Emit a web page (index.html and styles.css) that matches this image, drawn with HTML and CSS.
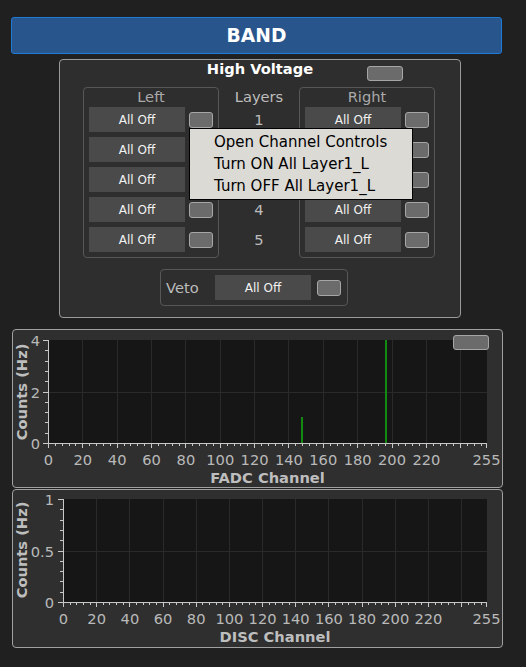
FILE: index.html
```html
<!DOCTYPE html>
<html>
<head>
<meta charset="utf-8">
<link rel="stylesheet" href="styles.css">
</head>
<body>
<div class="app">
  <header class="banner">BAND</header>

  <section class="hv">
    <div class="hv-title">
      <span></span>
      <h2>High Voltage</h2>
      <span class="toggle toggle-wide"></span>
    </div>
    <div class="hv-groups">
      <div class="side">
        <div class="side-label">Left</div>
        <div class="rows">
          <div class="row"><div class="alloff">All Off</div><span class="toggle"></span></div>
          <div class="row"><div class="alloff">All Off</div><span class="toggle"></span></div>
          <div class="row"><div class="alloff">All Off</div><span class="toggle"></span></div>
          <div class="row"><div class="alloff">All Off</div><span class="toggle"></span></div>
          <div class="row"><div class="alloff">All Off</div><span class="toggle"></span></div>
        </div>
      </div>
      <div class="layers">
        <div class="side-label layers-label">Layers</div>
        <div class="rows">
          <div class="num">1</div>
          <div class="num">2</div>
          <div class="num">3</div>
          <div class="num">4</div>
          <div class="num">5</div>
        </div>
      </div>
      <div class="side">
        <div class="side-label">Right</div>
        <div class="rows">
          <div class="row"><div class="alloff">All Off</div><span class="toggle"></span></div>
          <div class="row"><div class="alloff">All Off</div><span class="toggle"></span></div>
          <div class="row"><div class="alloff">All Off</div><span class="toggle"></span></div>
          <div class="row"><div class="alloff">All Off</div><span class="toggle"></span></div>
          <div class="row"><div class="alloff">All Off</div><span class="toggle"></span></div>
        </div>
      </div>
    </div>
    <div class="veto">
      <span class="veto-label">Veto</span>
      <div class="alloff">All Off</div>
      <span class="toggle veto-toggle"></span>
    </div>
  </section>

  <section class="plot plot-fadc">
    <svg width="489" height="157" viewBox="0 0 489 157">
      <rect x="36" y="10" width="438" height="103" fill="#161616"/>
      <line x1="35" y1="61.5" x2="474" y2="61.5" stroke="#2a2a2a" stroke-width="103" stroke-dasharray="1 33.353" shape-rendering="crispEdges"/>
      <line x1="36" y1="62.5" x2="474" y2="62.5" stroke="#2a2a2a" stroke-width="1" shape-rendering="crispEdges"/>
      <rect x="288" y="87" width="2" height="26" fill="#128a12"/>
      <rect x="372" y="10" width="2" height="103" fill="#128a12"/>
      <g stroke="#c8c8c8" fill="none" shape-rendering="crispEdges">
        <path d="M35.5 10V113.5H474"/>
        <line x1="35" y1="115" x2="474" y2="115" stroke-width="2" stroke-dasharray="1 5.8706"/>
        <line x1="35" y1="116" x2="474" y2="116" stroke-width="4" stroke-dasharray="1 33.353"/>
        <path d="M473.5 114v4"/>
        <line x1="33.5" y1="114" x2="33.5" y2="9" stroke-width="3" stroke-dasharray="1 9.3"/>
        <path d="M30 113.5h5M30 62.5h5M30 10.5h5"/>
      </g>
      <g class="ticklabels" text-anchor="end">
        <text x="27" y="15.8">4</text>
        <text x="27" y="67.8">2</text>
        <text x="27" y="118.8">0</text>
      </g>
      <g class="ticklabels" text-anchor="middle">
        <text x="35.5" y="135">0</text>
        <text x="69.85" y="135">20</text>
        <text x="104.2" y="135">40</text>
        <text x="138.56" y="135">60</text>
        <text x="172.9" y="135">80</text>
        <text x="207.3" y="135">100</text>
        <text x="241.6" y="135">120</text>
        <text x="275.97" y="135">140</text>
        <text x="310.3" y="135">160</text>
        <text x="344.7" y="135">180</text>
        <text x="379" y="135">200</text>
        <text x="413.4" y="135">220</text>
        <text x="473.5" y="135">255</text>
      </g>
      <text class="axistitle" x="254.5" y="153" text-anchor="middle">FADC Channel</text>
      <text class="axistitle" transform="translate(9,62) rotate(-90)" text-anchor="middle" dy="0.36em">Counts (Hz)</text>
    </svg>
    <span class="toggle toggle-plot"></span>
  </section>

  <section class="plot plot-disc">
    <svg width="489" height="157" viewBox="0 0 489 157">
      <rect x="51" y="9" width="423" height="103" fill="#161616"/>
      <line x1="50" y1="60.5" x2="474" y2="60.5" stroke="#2a2a2a" stroke-width="103" stroke-dasharray="1 32.1765" shape-rendering="crispEdges"/>
      <line x1="51" y1="61.5" x2="474" y2="61.5" stroke="#2a2a2a" stroke-width="1" shape-rendering="crispEdges"/>
      <g stroke="#c8c8c8" fill="none" shape-rendering="crispEdges">
        <path d="M50.5 9V112.5H474"/>
        <line x1="50" y1="114" x2="474" y2="114" stroke-width="2" stroke-dasharray="1 5.6353"/>
        <line x1="50" y1="115" x2="474" y2="115" stroke-width="4" stroke-dasharray="1 32.1765"/>
        <path d="M473.5 113v4"/>
        <line x1="48.5" y1="113" x2="48.5" y2="8" stroke-width="3" stroke-dasharray="1 9.3"/>
        <path d="M45 112.5h5M45 61.5h5M45 9.5h5"/>
      </g>
      <g class="ticklabels" text-anchor="end">
        <text x="41" y="14.8">1</text>
        <text x="41" y="66.8">0.5</text>
        <text x="41" y="117.8">0</text>
      </g>
      <g class="ticklabels" text-anchor="middle">
        <text x="50.5" y="134">0</text>
        <text x="83.7" y="134">20</text>
        <text x="116.9" y="134">40</text>
        <text x="150" y="134">60</text>
        <text x="183.2" y="134">80</text>
        <text x="216.4" y="134">100</text>
        <text x="249.6" y="134">120</text>
        <text x="282.7" y="134">140</text>
        <text x="315.9" y="134">160</text>
        <text x="349.1" y="134">180</text>
        <text x="382.3" y="134">200</text>
        <text x="415.4" y="134">220</text>
        <text x="473.5" y="134">255</text>
      </g>
      <text class="axistitle" x="262" y="152" text-anchor="middle">DISC Channel</text>
      <text class="axistitle" transform="translate(9,60) rotate(-90)" text-anchor="middle" dy="0.36em">Counts (Hz)</text>
    </svg>
  </section>
</div>

<div class="menu">
  <div class="menu-item">Open Channel Controls</div>
  <div class="menu-item">Turn ON All Layer1_L</div>
  <div class="menu-item">Turn OFF All Layer1_L</div>
</div>
</body>
</html>
```

FILE: styles.css
```css
* {
  box-sizing: border-box;
  margin: 0;
  padding: 0;
}

html,
body {
  background: #202020;
}

body {
  width: 526px;
  height: 667px;
  overflow: hidden;
  position: relative;
  font-family: "DejaVu Sans", "Liberation Sans", sans-serif;
}

.app {
  padding: 17px 0 0 11px;
  display: flex;
  flex-direction: column;
  align-items: flex-start;
}

.banner {
  width: 491px;
  height: 37px;
  background: #28558c;
  border: 1px solid #1f7ad6;
  border-radius: 3px;
  color: #ffffff;
  font-weight: bold;
  font-size: 18.67px;
  display: flex;
  align-items: center;
  justify-content: center;
}

.hv {
  margin: 5px 0 0 48px;
  width: 402px;
  height: 259px;
  background: #2e2e2e;
  border: 1px solid #9a9a9a;
  border-radius: 4px;
  display: flex;
  flex-direction: column;
}

.hv-title {
  height: 27px;
  display: grid;
  grid-template-columns: 1fr auto 1fr;
  align-items: start;
}

.hv-title h2 {
  font-size: 14.67px;
  line-height: 18px;
  color: #ffffff;
  font-weight: bold;
}

.toggle {
  display: block;
  flex: none;
  width: 24px;
  height: 16px;
  background: #6b6b6b;
  border: 1px solid #a6a6a6;
  border-radius: 3px;
}

.toggle-wide {
  width: 36px;
  height: 15px;
  margin: 6px 0 0 54px;
}

.hv-groups {
  display: flex;
  padding-left: 23px;
  height: 171px;
}

.side {
  width: 136px;
  height: 171px;
  border: 1px solid #575757;
  border-radius: 4px;
  padding: 0 5px;
}

.side-label {
  font-size: 14.67px;
  line-height: 17px;
  margin-bottom: 2px;
  text-align: center;
  color: #a9a9a9;
}

.layers {
  width: 80px;
  padding-top: 1px;
}

.layers-label {
  color: #bdbdbd;
}

.rows {
  display: flex;
  flex-direction: column;
  gap: 5px;
}

.row {
  display: flex;
  align-items: center;
  gap: 4px;
  height: 25px;
}

.alloff {
  flex: none;
  width: 96px;
  height: 25px;
  background: #4a4a4a;
  color: #f2f2f2;
  font-size: 12px;
  display: flex;
  align-items: center;
  justify-content: center;
}

.num {
  height: 25px;
  font-size: 14.67px;
  color: #bdbdbd;
  display: flex;
  align-items: center;
  justify-content: center;
}

.veto {
  margin: 11px 0 0 100px;
  width: 188px;
  height: 37px;
  border: 1px solid #575757;
  border-radius: 4px;
  padding: 0 5px;
  display: flex;
  align-items: center;
}

.veto-label {
  width: 49px;
  font-size: 14.67px;
  color: #bdbdbd;
}

.veto-toggle {
  margin-left: 6px;
}

.plot {
  position: relative;
  width: 491px;
  height: 159px;
  margin-left: 1px;
  background: #2f2f2f;
  border: 1px solid #a0a0a0;
  border-radius: 4px;
}

.plot-fadc {
  margin-top: 11px;
}

.plot-disc {
  margin-top: 1px;
}

.plot svg {
  display: block;
}

.ticklabels {
  fill: #b9b9b9;
  font-size: 14.67px;
  font-family: "DejaVu Sans", sans-serif;
}

.axistitle {
  fill: #bebebe;
  font-size: 14.67px;
  font-weight: bold;
  font-family: "DejaVu Sans", sans-serif;
}

.toggle-plot {
  position: absolute;
  left: 440px;
  top: 5px;
  width: 36px;
  height: 15px;
}

.menu {
  position: absolute;
  left: 189px;
  top: 128px;
  width: 224px;
  height: 72px;
  background: #dcdad5;
  border: 1px solid #000000;
  padding: 2px 0 0 24px;
  color: #000000;
  font-size: 15px;
  line-height: 22px;
}
```
